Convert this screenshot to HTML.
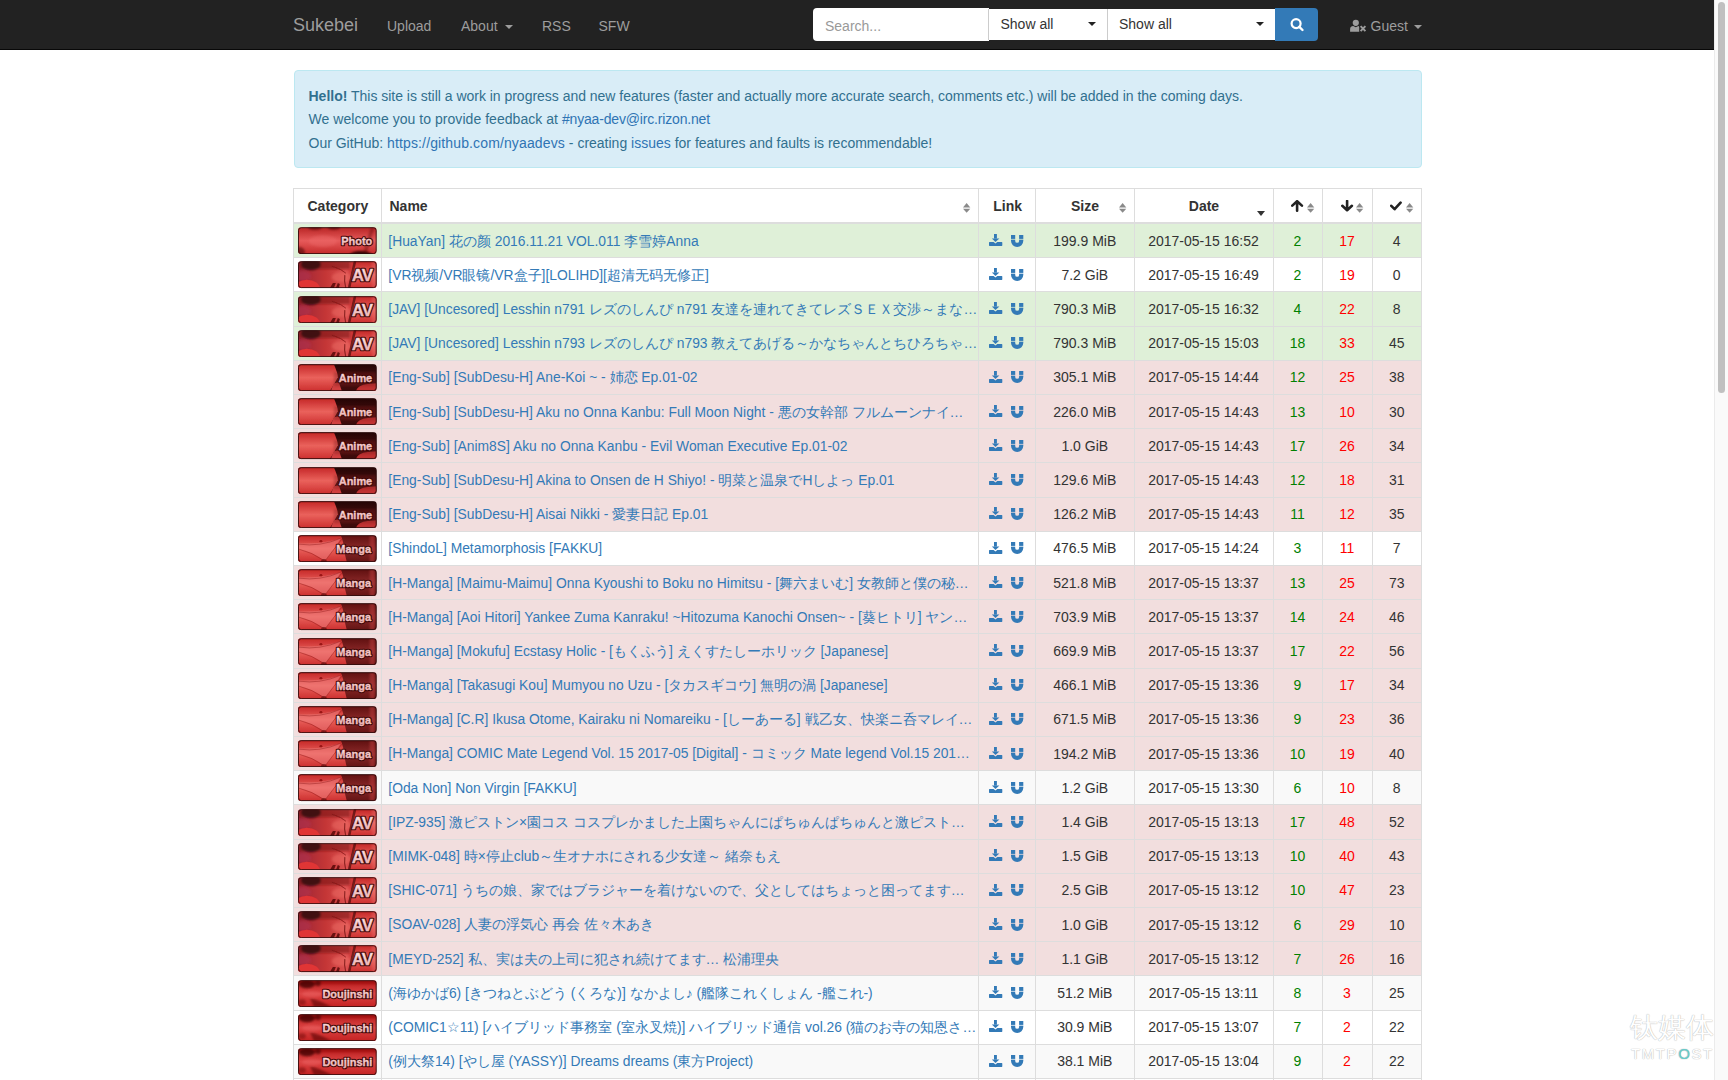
<!DOCTYPE html><html><head><meta charset="utf-8"><title>Sukebei</title><style>
*{margin:0;padding:0;box-sizing:border-box}
html,body{width:1728px;height:1080px;overflow:hidden;background:#fff}
body{font-family:"Liberation Sans",sans-serif;position:relative}
.t{position:absolute;white-space:nowrap}
.ic{position:absolute;display:block}
.abs{position:absolute}
.nav{position:absolute;left:0;top:0;width:1714px;height:50px;background:#222;border-bottom:1px solid #080808}
.caret{position:absolute;width:0;height:0;border-left:4px solid transparent;border-right:4px solid transparent;border-top:4.5px solid #9d9d9d}
.alert{position:absolute;left:293.5px;top:70px;width:1128.5px;height:97.5px;background:#d9edf7;border:1px solid #bce8f1;border-radius:4px}
.row{position:absolute;left:293.5px;width:1128px}
.hl{position:absolute;left:293px;width:1129px;height:1px;background:#ddd}
.vl{position:absolute;width:1px;background:#ddd}
.badge{position:absolute;left:298.2px;width:78.7px;height:27.3px;border-radius:3.5px;overflow:hidden;border:1px solid #4a1010}
.badge span{position:absolute;right:4px;font-weight:700;color:#f8d8d8;white-space:nowrap;text-shadow:-1px 0 #5a0a0a,1px 0 #5a0a0a,0 -1px #5a0a0a,0 1px #5a0a0a,1px 1px #5a0a0a,-1px -1px #5a0a0a,1px -1px #5a0a0a,-1px 1px #5a0a0a}
.nm{position:absolute;left:388.3px;width:589px;overflow:hidden;text-overflow:ellipsis;white-space:nowrap;color:#337ab7;font-size:13.85px;line-height:16px}
.c{position:absolute;text-align:center;font-size:14px;line-height:16px;white-space:nowrap}
</style></head><body><svg width="0" height="0" style="position:absolute">
<defs>
<filter id="bl" x="-20%" y="-50%" width="140%" height="200%"><feGaussianBlur stdDeviation="1.2"/></filter>
<filter id="bl2" x="-20%" y="-50%" width="140%" height="200%"><feGaussianBlur stdDeviation="0.6"/></filter>
<linearGradient id="gv" x1="0" y1="0" x2="0" y2="1"><stop offset="0" stop-color="#b82424"/><stop offset="0.5" stop-color="#e65a5a"/><stop offset="1" stop-color="#c42a2a"/></linearGradient>
<linearGradient id="gvl" x1="0" y1="0" x2="0" y2="1"><stop offset="0" stop-color="#c42626"/><stop offset="0.5" stop-color="#ea625c"/><stop offset="1" stop-color="#cc2e2e"/></linearGradient>
<linearGradient id="gdj" x1="0" y1="0" x2="0" y2="1"><stop offset="0" stop-color="#b81a1a"/><stop offset="0.5" stop-color="#dc4444"/><stop offset="1" stop-color="#c42222"/></linearGradient>
<linearGradient id="gav" x1="0" y1="0" x2="1" y2="0"><stop offset="0" stop-color="#9a2436"/><stop offset="0.35" stop-color="#c43636"/><stop offset="0.62" stop-color="#dc5050"/><stop offset="0.7" stop-color="#c83030"/></linearGradient>
<linearGradient id="gdk" x1="0" y1="0" x2="0" y2="1"><stop offset="0" stop-color="#240404"/><stop offset="0.6" stop-color="#4a1010"/><stop offset="1" stop-color="#3a0a0a"/></linearGradient>
<linearGradient id="gmr" x1="0" y1="0" x2="0" y2="1"><stop offset="0" stop-color="#601010"/><stop offset="0.5" stop-color="#8a2828"/><stop offset="1" stop-color="#641414"/></linearGradient>
<linearGradient id="gtx" x1="0" y1="0" x2="0" y2="1"><stop offset="0" stop-color="#fff0f0"/><stop offset="1" stop-color="#eaa4a4"/></linearGradient>
<clipPath id="bc"><rect x="0" y="0" width="79" height="27" rx="3"/></clipPath>
<symbol id="b-Photo" viewBox="0 0 79 27"><g clip-path="url(#bc)">
<rect width="79" height="27" fill="url(#gv)"/>
<g filter="url(#bl)">
<ellipse cx="63" cy="28" rx="11" ry="4" fill="#2a0404" opacity="0.9"/>
<ellipse cx="17" cy="0" rx="7" ry="2.5" fill="#3a0606" opacity="0.6"/>
<ellipse cx="36" cy="0" rx="6" ry="2.5" fill="#3a0606" opacity="0.6"/>
<path d="M73 0L77 0L69 27L65 27Z" fill="#4a0808" opacity="0.35"/>
<ellipse cx="1" cy="25" rx="6" ry="5" fill="#3a0606" opacity="0.5"/>
<ellipse cx="25" cy="14" rx="14" ry="6" fill="#f07070" opacity="0.35"/>
</g></g></symbol>
<symbol id="b-AV" viewBox="0 0 79 27"><g clip-path="url(#bc)">
<rect width="79" height="27" fill="url(#gav)"/>
<g filter="url(#bl)">
<rect x="0" y="0" width="52" height="8" fill="#7a1010" opacity="0.6"/>
<ellipse cx="13" cy="3" rx="10" ry="6" fill="#300810" opacity="0.8"/>
<ellipse cx="5" cy="15" rx="8" ry="5" fill="#b03050" opacity="0.6"/>
<ellipse cx="44" cy="16" rx="10" ry="5" fill="#f07068" opacity="0.45"/>
</g>
<g filter="url(#bl2)">
<ellipse cx="9" cy="27.5" rx="13" ry="9" fill="#e03434"/>
<path d="M32 27L35 22L38 22L36 27Z M38 27L40 22L42 23L41 27Z" fill="#4a0808" opacity="0.75"/>
<path d="M34 5Q44 8 48 12" fill="none" stroke="#7a1010" stroke-width="1" opacity="0.7"/>
<path d="M47 14Q46 20 48 27" fill="none" stroke="#5a0a0a" stroke-width="1.2" opacity="0.6"/>
</g>
<path d="M56.5 0L79 0L79 27L51 27Z" fill="url(#gvl)"/>
<path d="M56 0L58.5 0L52.5 27L50 27Z" fill="#4a0808" opacity="0.7" filter="url(#bl2)"/>
<rect x="74" y="0" width="5" height="27" fill="#f08080" opacity="0.3" filter="url(#bl)"/>
</g></symbol>
<symbol id="b-Anime" viewBox="0 0 79 27"><g clip-path="url(#bc)">
<rect width="79" height="27" fill="url(#gdk)"/>
<g filter="url(#bl2)">
<path d="M0 0L36 0Q40 9 40 13Q38 17 32 27L0 27Z" fill="url(#gvl)"/>
<path d="M33 27L36 19L41 18L44 27Z" fill="#d04040"/>
<path d="M58 27Q60 21 70 20L79 19L79 27Z" fill="#c03030"/>
</g>
<rect x="36" y="8" width="43" height="14" fill="#7a1a1a" opacity="0.35" filter="url(#bl)"/>
</g></symbol>
<symbol id="b-Manga" viewBox="0 0 79 27"><g clip-path="url(#bc)">
<rect width="79" height="27" fill="url(#gmr)"/>
<rect x="72" y="0" width="5" height="27" fill="#c04040" opacity="0.5" filter="url(#bl)"/>
<path d="M0 0L43 0Q46 8 46 12Q47 20 49 27L0 27Z" fill="url(#gvl)" filter="url(#bl2)"/>
<path d="M1 8Q20 10 43 3L36 14Q30 22 27 26Q14 16 1 14Z" fill="#f48a8a" opacity="0.45" filter="url(#bl2)"/>
<path d="M1 14Q14 17 27 26M27 26Q33 18 44 4M1 9Q22 12 43 3" fill="none" stroke="#8a1414" stroke-width="0.7" opacity="0.6"/>
<ellipse cx="26" cy="27" rx="3" ry="3" fill="#6a0c0c" opacity="0.7" filter="url(#bl2)"/>
<ellipse cx="23" cy="6" rx="1.5" ry="1.2" fill="#8a0a0a" opacity="0.8"/>
</g></symbol>
<symbol id="b-Doujinshi" viewBox="0 0 79 27"><g clip-path="url(#bc)">
<rect width="79" height="27" fill="url(#gdj)"/>
<g filter="url(#bl)">
<rect x="0" y="0" width="79" height="4" fill="#8a0c0c" opacity="0.5"/>
<ellipse cx="9" cy="4" rx="8" ry="4" fill="#3a0404" opacity="0.75"/>
<ellipse cx="20" cy="3" rx="3" ry="3" fill="#3a0404" opacity="0.6"/>
<ellipse cx="14" cy="14" rx="10" ry="3" fill="#f07070" opacity="0.35"/>
<path d="M12 18Q22 20 34 27L16 27Z" fill="#4a0606" opacity="0.55"/>
<ellipse cx="4" cy="22" rx="4" ry="3" fill="#5a0808" opacity="0.4"/>
</g>
</g></symbol>
</defs></svg>
<div class="nav"></div>
<div class="t" style="left:293.00px;top:16.26px;font-size:18px;line-height:18px;color:#9d9d9d;font-weight:400;">Sukebei</div>
<div class="t" style="left:387.00px;top:18.65px;font-size:14px;line-height:14px;color:#9d9d9d;font-weight:400;">Upload</div>
<div class="t" style="left:461.00px;top:18.75px;font-size:14px;line-height:14px;color:#9d9d9d;font-weight:400;">About</div>
<div class="caret" style="left:505px;top:25px"></div>
<div class="t" style="left:542.00px;top:18.75px;font-size:14px;line-height:14px;color:#9d9d9d;font-weight:400;">RSS</div>
<div class="t" style="left:598.50px;top:18.75px;font-size:14px;line-height:14px;color:#9d9d9d;font-weight:400;">SFW</div>
<div class="abs" style="left:812.7px;top:8px;width:176px;height:33px;background:#fff;border-radius:4px 0 0 4px"></div>
<div class="t" style="left:825.00px;top:18.85px;font-size:14px;line-height:14px;color:#999;font-weight:400;">Search...</div>
<div class="abs" style="left:988px;top:8.7px;width:287px;height:31.3px;background:#fff"></div>
<div class="abs" style="left:988px;top:8.7px;width:1px;height:31.3px;background:#ccc"></div>
<div class="abs" style="left:1107px;top:8.7px;width:1px;height:31.3px;background:#ccc"></div>
<div class="t" style="left:1000.50px;top:16.75px;font-size:14px;line-height:14px;color:#333;font-weight:400;">Show all</div>
<div class="caret" style="left:1087.5px;top:22px;border-top-color:#222"></div>
<div class="t" style="left:1119.00px;top:16.75px;font-size:14px;line-height:14px;color:#333;font-weight:400;">Show all</div>
<div class="caret" style="left:1256px;top:22px;border-top-color:#222"></div>
<div class="abs" style="left:1275px;top:8.3px;width:43.4px;height:32.3px;background:#337ab7;border-radius:0 4px 4px 0"></div>
<svg class="ic" style="left:1288px;top:16px" width="18" height="18" viewBox="0 0 18 18"><circle cx="8.1" cy="7.6" r="4.5" fill="none" stroke="#fff" stroke-width="2.2"/><path d="M11.3 10.8L14.5 14" stroke="#fff" stroke-width="2.4" stroke-linecap="round"/></svg>
<svg class="ic" style="left:1349px;top:18px" width="19" height="15" viewBox="0 0 19 15"><circle cx="6.8" cy="4.8" r="3.1" fill="#9d9d9d"/><path d="M1.1 13.8V11.2Q1.1 8.2 4.2 8.0L6.8 9.2L9.4 8.0Q10.4 8.2 10.2 9.2V13.8Z" fill="#9d9d9d"/><path d="M11.6 8.2L16.4 13.2M16.4 8.2L11.6 13.2" stroke="#9d9d9d" stroke-width="1.9"/></svg>
<div class="t" style="left:1370.50px;top:18.95px;font-size:14px;line-height:14px;color:#9d9d9d;font-weight:400;">Guest</div>
<div class="caret" style="left:1413.5px;top:24.5px"></div>
<div class="alert"></div>
<div class="t" style="left:308.50px;top:88.75px;font-size:14px;line-height:14px;color:#31708f;font-weight:400;"><b>Hello!</b><span style="letter-spacing:-0.02px"> This site is still a work in progress and new features (faster and actually more accurate search, comments etc.) will be added in the coming days.</span></div>
<div class="t" style="left:308.50px;top:111.85px;font-size:14px;line-height:14px;color:#31708f;font-weight:400;"><span style="letter-spacing:0.04px">We welcome you to provide feedback at </span><span style="color:#2f74b4;letter-spacing:-0.17px">#nyaa-dev@irc.rizon.net</span></div>
<div class="t" style="left:308.50px;top:136.25px;font-size:14px;line-height:14px;color:#31708f;font-weight:400;">Our GitHub: <span style="color:#2f74b4;letter-spacing:0.13px">https://github.com/nyaadevs</span> - creating <span style="color:#2f74b4">issues</span> for features and faults is recommendable!</div>
<div class="row" style="top:224.10px;height:34.20px;background:#dff0d8"></div>
<div class="row" style="top:258.30px;height:34.20px;background:#fff"></div>
<div class="row" style="top:292.49px;height:34.20px;background:#dff0d8"></div>
<div class="row" style="top:326.69px;height:34.20px;background:#dff0d8"></div>
<div class="row" style="top:360.88px;height:34.20px;background:#f2dede"></div>
<div class="row" style="top:395.08px;height:34.20px;background:#f2dede"></div>
<div class="row" style="top:429.28px;height:34.20px;background:#f2dede"></div>
<div class="row" style="top:463.47px;height:34.20px;background:#f2dede"></div>
<div class="row" style="top:497.67px;height:34.20px;background:#f2dede"></div>
<div class="row" style="top:531.86px;height:34.20px;background:#fff"></div>
<div class="row" style="top:566.06px;height:34.20px;background:#f2dede"></div>
<div class="row" style="top:600.26px;height:34.20px;background:#f2dede"></div>
<div class="row" style="top:634.45px;height:34.20px;background:#f2dede"></div>
<div class="row" style="top:668.65px;height:34.20px;background:#f2dede"></div>
<div class="row" style="top:702.84px;height:34.20px;background:#f2dede"></div>
<div class="row" style="top:737.04px;height:34.20px;background:#f2dede"></div>
<div class="row" style="top:771.24px;height:34.20px;background:#f9f9f9"></div>
<div class="row" style="top:805.43px;height:34.20px;background:#f2dede"></div>
<div class="row" style="top:839.63px;height:34.20px;background:#f2dede"></div>
<div class="row" style="top:873.82px;height:34.20px;background:#f2dede"></div>
<div class="row" style="top:908.02px;height:34.20px;background:#f2dede"></div>
<div class="row" style="top:942.22px;height:34.20px;background:#f2dede"></div>
<div class="row" style="top:976.41px;height:34.20px;background:#f9f9f9"></div>
<div class="row" style="top:1010.61px;height:34.20px;background:#fff"></div>
<div class="row" style="top:1044.80px;height:34.20px;background:#f9f9f9"></div>
<div class="hl" style="top:188px"></div>
<div class="hl" style="top:222px;height:2px"></div>
<div class="hl" style="top:257.30px"></div>
<div class="hl" style="top:291.49px"></div>
<div class="hl" style="top:325.69px"></div>
<div class="hl" style="top:359.88px"></div>
<div class="hl" style="top:394.08px"></div>
<div class="hl" style="top:428.28px"></div>
<div class="hl" style="top:462.47px"></div>
<div class="hl" style="top:496.67px"></div>
<div class="hl" style="top:530.86px"></div>
<div class="hl" style="top:565.06px"></div>
<div class="hl" style="top:599.26px"></div>
<div class="hl" style="top:633.45px"></div>
<div class="hl" style="top:667.65px"></div>
<div class="hl" style="top:701.84px"></div>
<div class="hl" style="top:736.04px"></div>
<div class="hl" style="top:770.24px"></div>
<div class="hl" style="top:804.43px"></div>
<div class="hl" style="top:838.63px"></div>
<div class="hl" style="top:872.82px"></div>
<div class="hl" style="top:907.02px"></div>
<div class="hl" style="top:941.22px"></div>
<div class="hl" style="top:975.41px"></div>
<div class="hl" style="top:1009.61px"></div>
<div class="hl" style="top:1043.80px"></div>
<div class="hl" style="top:1078.00px"></div>
<div class="vl" style="left:293.00px;top:188px;height:892px"></div>
<div class="vl" style="left:380.50px;top:188px;height:892px"></div>
<div class="vl" style="left:977.50px;top:188px;height:892px"></div>
<div class="vl" style="left:1035.00px;top:188px;height:892px"></div>
<div class="vl" style="left:1133.50px;top:188px;height:892px"></div>
<div class="vl" style="left:1272.50px;top:188px;height:892px"></div>
<div class="vl" style="left:1321.50px;top:188px;height:892px"></div>
<div class="vl" style="left:1371.50px;top:188px;height:892px"></div>
<div class="vl" style="left:1421.00px;top:188px;height:892px"></div>
<div class="t" style="left:307.50px;top:198.65px;font-size:14px;line-height:14px;color:#333;font-weight:700;">Category</div>
<div class="t" style="left:389.50px;top:198.65px;font-size:14px;line-height:14px;color:#333;font-weight:700;">Name</div>
<svg class="ic" style="left:962.80px;top:203.20px" width="8" height="10" viewBox="0 0 8 10"><path d="M0 4.5L3.65 0L7.3 4.5Z" fill="#8a8a8a"/><path d="M0 5.8L3.65 9.8L7.3 5.8Z" fill="#8a8a8a"/></svg>
<div class="t" style="left:993.30px;top:198.65px;font-size:14px;line-height:14px;color:#333;font-weight:700;">Link</div>
<div class="t" style="left:1071.00px;top:198.65px;font-size:14px;line-height:14px;color:#333;font-weight:700;">Size</div>
<svg class="ic" style="left:1118.50px;top:203.20px" width="8" height="10" viewBox="0 0 8 10"><path d="M0 4.5L3.65 0L7.3 4.5Z" fill="#8a8a8a"/><path d="M0 5.8L3.65 9.8L7.3 5.8Z" fill="#8a8a8a"/></svg>
<div class="t" style="left:1188.80px;top:198.65px;font-size:14px;line-height:14px;color:#333;font-weight:700;">Date</div>
<div class="caret" style="left:1256.5px;top:211px;border-top:5px solid #333;border-left-width:4px;border-right-width:4px"></div>
<svg class="ic" style="left:1291px;top:200px" width="13" height="12" viewBox="0 0 13 12"><path d="M1.3 5.6L6.1 1.2L10.9 5.6M6.1 1.6V10.7" fill="none" stroke="#222" stroke-width="2.6" stroke-linecap="round" stroke-linejoin="round"/></svg>
<svg class="ic" style="left:1306.80px;top:203.20px" width="8" height="10" viewBox="0 0 8 10"><path d="M0 4.5L3.65 0L7.3 4.5Z" fill="#8a8a8a"/><path d="M0 5.8L3.65 9.8L7.3 5.8Z" fill="#8a8a8a"/></svg>
<svg class="ic" style="left:1341px;top:200px" width="13" height="12" viewBox="0 0 13 12"><path d="M1.3 5.8L6.1 10.2L10.9 5.8M6.1 9.8V0.9" fill="none" stroke="#222" stroke-width="2.6" stroke-linecap="round" stroke-linejoin="round"/></svg>
<svg class="ic" style="left:1355.80px;top:203.20px" width="8" height="10" viewBox="0 0 8 10"><path d="M0 4.5L3.65 0L7.3 4.5Z" fill="#8a8a8a"/><path d="M0 5.8L3.65 9.8L7.3 5.8Z" fill="#8a8a8a"/></svg>
<svg class="ic" style="left:1390px;top:200px" width="13" height="12" viewBox="0 0 13 12"><path d="M1.3 5.8L4.6 9.2L10.6 2.6" fill="none" stroke="#222" stroke-width="2.6" stroke-linecap="round" stroke-linejoin="round"/></svg>
<svg class="ic" style="left:1405.80px;top:203.20px" width="8" height="10" viewBox="0 0 8 10"><path d="M0 4.5L3.65 0L7.3 4.5Z" fill="#8a8a8a"/><path d="M0 5.8L3.65 9.8L7.3 5.8Z" fill="#8a8a8a"/></svg>
<svg class="ic" style="left:298.2px;top:227.20px" width="78.7" height="27.3" viewBox="0 0 79 27"><use href="#b-Photo"/><rect x="0.5" y="0.5" width="78" height="26" rx="2.8" fill="none" stroke="#2a0c0c" stroke-width="1" opacity="0.85"/><text x="74.5" y="17.6" text-anchor="end" font-family="Liberation Sans" font-weight="700" font-size="11" fill="#3a0505" stroke="#3a0505" stroke-width="2.6" stroke-linejoin="round">Photo</text><text x="74.5" y="17.6" text-anchor="end" font-family="Liberation Sans" font-weight="700" font-size="11" fill="url(#gtx)" stroke="#f2c4c4" stroke-width="0.35">Photo</text></svg>
<div class="nm" style="top:232.55px">[HuaYan] 花の颜 2016.11.21 VOL.011 李雪婷Anna</div>
<svg class="ic" style="left:989px;top:233.90px" width="14" height="12" viewBox="0 0 14 12"><rect x="5.0" y="0" width="2.9" height="4.6" fill="#337ab7"/><path d="M2.9 4.4H10.4L6.45 8.1Z" fill="#337ab7"/><path d="M0.6 7.9H4.6L6.45 9.5L8.3 7.9H12.7Q13.3 7.9 13.3 8.5V11.3Q13.3 11.9 12.7 11.9H0.6Q0 11.9 0 11.3V8.5Q0 7.9 0.6 7.9Z" fill="#337ab7"/></svg>
<svg class="ic" style="left:1011.3px;top:234.70px" width="13" height="13" viewBox="0 0 13 13"><rect x="0" y="0" width="4.2" height="3.9" fill="#337ab7"/><rect x="8.1" y="0" width="4.2" height="3.9" fill="#337ab7"/><rect x="0" y="3.9" width="4.2" height="1.1" fill="#337ab7" opacity="0.35"/><rect x="8.1" y="3.9" width="4.2" height="1.1" fill="#337ab7" opacity="0.35"/><path d="M0 5.0H4.2V5.9A1.95 1.95 0 0 0 8.1 5.9V5.0H12.3V5.85A6.15 6.15 0 0 1 0 5.85Z" fill="#337ab7"/></svg>
<div class="c" style="left:1035.50px;width:98.50px;top:232.60px;color:#333">199.9 MiB</div>
<div class="c" style="left:1134.00px;width:139.00px;top:232.60px;color:#333">2017-05-15 16:52</div>
<div class="c" style="left:1273.00px;width:49.00px;top:232.60px;color:#008000">2</div>
<div class="c" style="left:1322.00px;width:50.00px;top:232.60px;color:#ff0000">17</div>
<div class="c" style="left:1372.00px;width:49.50px;top:232.60px;color:#333">4</div>
<svg class="ic" style="left:298.2px;top:261.40px" width="78.7" height="27.3" viewBox="0 0 79 27"><use href="#b-AV"/><rect x="0.5" y="0.5" width="78" height="26" rx="2.8" fill="none" stroke="#2a0c0c" stroke-width="1" opacity="0.85"/><text x="74.5" y="19.6" text-anchor="end" font-family="Liberation Sans" font-weight="700" font-size="17" letter-spacing="-0.9" fill="#3a0505" stroke="#3a0505" stroke-width="2.6" stroke-linejoin="round">AV</text><text x="74.5" y="19.6" text-anchor="end" font-family="Liberation Sans" font-weight="700" font-size="17" letter-spacing="-0.9" fill="url(#gtx)" stroke="#f2c4c4" stroke-width="0.35">AV</text></svg>
<div class="nm" style="top:266.75px">[VR视频/VR眼镜/VR盒子][LOLIHD][超清无码无修正]</div>
<svg class="ic" style="left:989px;top:268.10px" width="14" height="12" viewBox="0 0 14 12"><rect x="5.0" y="0" width="2.9" height="4.6" fill="#337ab7"/><path d="M2.9 4.4H10.4L6.45 8.1Z" fill="#337ab7"/><path d="M0.6 7.9H4.6L6.45 9.5L8.3 7.9H12.7Q13.3 7.9 13.3 8.5V11.3Q13.3 11.9 12.7 11.9H0.6Q0 11.9 0 11.3V8.5Q0 7.9 0.6 7.9Z" fill="#337ab7"/></svg>
<svg class="ic" style="left:1011.3px;top:268.90px" width="13" height="13" viewBox="0 0 13 13"><rect x="0" y="0" width="4.2" height="3.9" fill="#337ab7"/><rect x="8.1" y="0" width="4.2" height="3.9" fill="#337ab7"/><rect x="0" y="3.9" width="4.2" height="1.1" fill="#337ab7" opacity="0.35"/><rect x="8.1" y="3.9" width="4.2" height="1.1" fill="#337ab7" opacity="0.35"/><path d="M0 5.0H4.2V5.9A1.95 1.95 0 0 0 8.1 5.9V5.0H12.3V5.85A6.15 6.15 0 0 1 0 5.85Z" fill="#337ab7"/></svg>
<div class="c" style="left:1035.50px;width:98.50px;top:266.80px;color:#333">7.2 GiB</div>
<div class="c" style="left:1134.00px;width:139.00px;top:266.80px;color:#333">2017-05-15 16:49</div>
<div class="c" style="left:1273.00px;width:49.00px;top:266.80px;color:#008000">2</div>
<div class="c" style="left:1322.00px;width:50.00px;top:266.80px;color:#ff0000">19</div>
<div class="c" style="left:1372.00px;width:49.50px;top:266.80px;color:#333">0</div>
<svg class="ic" style="left:298.2px;top:295.59px" width="78.7" height="27.3" viewBox="0 0 79 27"><use href="#b-AV"/><rect x="0.5" y="0.5" width="78" height="26" rx="2.8" fill="none" stroke="#2a0c0c" stroke-width="1" opacity="0.85"/><text x="74.5" y="19.6" text-anchor="end" font-family="Liberation Sans" font-weight="700" font-size="17" letter-spacing="-0.9" fill="#3a0505" stroke="#3a0505" stroke-width="2.6" stroke-linejoin="round">AV</text><text x="74.5" y="19.6" text-anchor="end" font-family="Liberation Sans" font-weight="700" font-size="17" letter-spacing="-0.9" fill="url(#gtx)" stroke="#f2c4c4" stroke-width="0.35">AV</text></svg>
<div class="nm" style="top:300.94px">[JAV] [Uncesored] Lesshin n791 レズのしんぴ n791 友達を連れてきてレズＳＥＸ交渉～まなみちゃんとゆうこちゃん</div>
<svg class="ic" style="left:989px;top:302.29px" width="14" height="12" viewBox="0 0 14 12"><rect x="5.0" y="0" width="2.9" height="4.6" fill="#337ab7"/><path d="M2.9 4.4H10.4L6.45 8.1Z" fill="#337ab7"/><path d="M0.6 7.9H4.6L6.45 9.5L8.3 7.9H12.7Q13.3 7.9 13.3 8.5V11.3Q13.3 11.9 12.7 11.9H0.6Q0 11.9 0 11.3V8.5Q0 7.9 0.6 7.9Z" fill="#337ab7"/></svg>
<svg class="ic" style="left:1011.3px;top:303.09px" width="13" height="13" viewBox="0 0 13 13"><rect x="0" y="0" width="4.2" height="3.9" fill="#337ab7"/><rect x="8.1" y="0" width="4.2" height="3.9" fill="#337ab7"/><rect x="0" y="3.9" width="4.2" height="1.1" fill="#337ab7" opacity="0.35"/><rect x="8.1" y="3.9" width="4.2" height="1.1" fill="#337ab7" opacity="0.35"/><path d="M0 5.0H4.2V5.9A1.95 1.95 0 0 0 8.1 5.9V5.0H12.3V5.85A6.15 6.15 0 0 1 0 5.85Z" fill="#337ab7"/></svg>
<div class="c" style="left:1035.50px;width:98.50px;top:300.99px;color:#333">790.3 MiB</div>
<div class="c" style="left:1134.00px;width:139.00px;top:300.99px;color:#333">2017-05-15 16:32</div>
<div class="c" style="left:1273.00px;width:49.00px;top:300.99px;color:#008000">4</div>
<div class="c" style="left:1322.00px;width:50.00px;top:300.99px;color:#ff0000">22</div>
<div class="c" style="left:1372.00px;width:49.50px;top:300.99px;color:#333">8</div>
<svg class="ic" style="left:298.2px;top:329.79px" width="78.7" height="27.3" viewBox="0 0 79 27"><use href="#b-AV"/><rect x="0.5" y="0.5" width="78" height="26" rx="2.8" fill="none" stroke="#2a0c0c" stroke-width="1" opacity="0.85"/><text x="74.5" y="19.6" text-anchor="end" font-family="Liberation Sans" font-weight="700" font-size="17" letter-spacing="-0.9" fill="#3a0505" stroke="#3a0505" stroke-width="2.6" stroke-linejoin="round">AV</text><text x="74.5" y="19.6" text-anchor="end" font-family="Liberation Sans" font-weight="700" font-size="17" letter-spacing="-0.9" fill="url(#gtx)" stroke="#f2c4c4" stroke-width="0.35">AV</text></svg>
<div class="nm" style="top:335.14px">[JAV] [Uncesored] Lesshin n793 レズのしんぴ n793 教えてあげる～かなちゃんとちひろちゃん</div>
<svg class="ic" style="left:989px;top:336.49px" width="14" height="12" viewBox="0 0 14 12"><rect x="5.0" y="0" width="2.9" height="4.6" fill="#337ab7"/><path d="M2.9 4.4H10.4L6.45 8.1Z" fill="#337ab7"/><path d="M0.6 7.9H4.6L6.45 9.5L8.3 7.9H12.7Q13.3 7.9 13.3 8.5V11.3Q13.3 11.9 12.7 11.9H0.6Q0 11.9 0 11.3V8.5Q0 7.9 0.6 7.9Z" fill="#337ab7"/></svg>
<svg class="ic" style="left:1011.3px;top:337.29px" width="13" height="13" viewBox="0 0 13 13"><rect x="0" y="0" width="4.2" height="3.9" fill="#337ab7"/><rect x="8.1" y="0" width="4.2" height="3.9" fill="#337ab7"/><rect x="0" y="3.9" width="4.2" height="1.1" fill="#337ab7" opacity="0.35"/><rect x="8.1" y="3.9" width="4.2" height="1.1" fill="#337ab7" opacity="0.35"/><path d="M0 5.0H4.2V5.9A1.95 1.95 0 0 0 8.1 5.9V5.0H12.3V5.85A6.15 6.15 0 0 1 0 5.85Z" fill="#337ab7"/></svg>
<div class="c" style="left:1035.50px;width:98.50px;top:335.19px;color:#333">790.3 MiB</div>
<div class="c" style="left:1134.00px;width:139.00px;top:335.19px;color:#333">2017-05-15 15:03</div>
<div class="c" style="left:1273.00px;width:49.00px;top:335.19px;color:#008000">18</div>
<div class="c" style="left:1322.00px;width:50.00px;top:335.19px;color:#ff0000">33</div>
<div class="c" style="left:1372.00px;width:49.50px;top:335.19px;color:#333">45</div>
<svg class="ic" style="left:298.2px;top:363.98px" width="78.7" height="27.3" viewBox="0 0 79 27"><use href="#b-Anime"/><rect x="0.5" y="0.5" width="78" height="26" rx="2.8" fill="none" stroke="#2a0c0c" stroke-width="1" opacity="0.85"/><text x="74.5" y="17.6" text-anchor="end" font-family="Liberation Sans" font-weight="700" font-size="11" fill="#3a0505" stroke="#3a0505" stroke-width="2.6" stroke-linejoin="round">Anime</text><text x="74.5" y="17.6" text-anchor="end" font-family="Liberation Sans" font-weight="700" font-size="11" fill="url(#gtx)" stroke="#f2c4c4" stroke-width="0.35">Anime</text></svg>
<div class="nm" style="top:369.33px">[Eng-Sub] [SubDesu-H] Ane-Koi ~ - 姉恋 Ep.01-02</div>
<svg class="ic" style="left:989px;top:370.68px" width="14" height="12" viewBox="0 0 14 12"><rect x="5.0" y="0" width="2.9" height="4.6" fill="#337ab7"/><path d="M2.9 4.4H10.4L6.45 8.1Z" fill="#337ab7"/><path d="M0.6 7.9H4.6L6.45 9.5L8.3 7.9H12.7Q13.3 7.9 13.3 8.5V11.3Q13.3 11.9 12.7 11.9H0.6Q0 11.9 0 11.3V8.5Q0 7.9 0.6 7.9Z" fill="#337ab7"/></svg>
<svg class="ic" style="left:1011.3px;top:371.48px" width="13" height="13" viewBox="0 0 13 13"><rect x="0" y="0" width="4.2" height="3.9" fill="#337ab7"/><rect x="8.1" y="0" width="4.2" height="3.9" fill="#337ab7"/><rect x="0" y="3.9" width="4.2" height="1.1" fill="#337ab7" opacity="0.35"/><rect x="8.1" y="3.9" width="4.2" height="1.1" fill="#337ab7" opacity="0.35"/><path d="M0 5.0H4.2V5.9A1.95 1.95 0 0 0 8.1 5.9V5.0H12.3V5.85A6.15 6.15 0 0 1 0 5.85Z" fill="#337ab7"/></svg>
<div class="c" style="left:1035.50px;width:98.50px;top:369.38px;color:#333">305.1 MiB</div>
<div class="c" style="left:1134.00px;width:139.00px;top:369.38px;color:#333">2017-05-15 14:44</div>
<div class="c" style="left:1273.00px;width:49.00px;top:369.38px;color:#008000">12</div>
<div class="c" style="left:1322.00px;width:50.00px;top:369.38px;color:#ff0000">25</div>
<div class="c" style="left:1372.00px;width:49.50px;top:369.38px;color:#333">38</div>
<svg class="ic" style="left:298.2px;top:398.18px" width="78.7" height="27.3" viewBox="0 0 79 27"><use href="#b-Anime"/><rect x="0.5" y="0.5" width="78" height="26" rx="2.8" fill="none" stroke="#2a0c0c" stroke-width="1" opacity="0.85"/><text x="74.5" y="17.6" text-anchor="end" font-family="Liberation Sans" font-weight="700" font-size="11" fill="#3a0505" stroke="#3a0505" stroke-width="2.6" stroke-linejoin="round">Anime</text><text x="74.5" y="17.6" text-anchor="end" font-family="Liberation Sans" font-weight="700" font-size="11" fill="url(#gtx)" stroke="#f2c4c4" stroke-width="0.35">Anime</text></svg>
<div class="nm" style="top:403.53px">[Eng-Sub] [SubDesu-H] Aku no Onna Kanbu: Full Moon Night - 悪の女幹部 フルムーンナイト Ep.01</div>
<svg class="ic" style="left:989px;top:404.88px" width="14" height="12" viewBox="0 0 14 12"><rect x="5.0" y="0" width="2.9" height="4.6" fill="#337ab7"/><path d="M2.9 4.4H10.4L6.45 8.1Z" fill="#337ab7"/><path d="M0.6 7.9H4.6L6.45 9.5L8.3 7.9H12.7Q13.3 7.9 13.3 8.5V11.3Q13.3 11.9 12.7 11.9H0.6Q0 11.9 0 11.3V8.5Q0 7.9 0.6 7.9Z" fill="#337ab7"/></svg>
<svg class="ic" style="left:1011.3px;top:405.68px" width="13" height="13" viewBox="0 0 13 13"><rect x="0" y="0" width="4.2" height="3.9" fill="#337ab7"/><rect x="8.1" y="0" width="4.2" height="3.9" fill="#337ab7"/><rect x="0" y="3.9" width="4.2" height="1.1" fill="#337ab7" opacity="0.35"/><rect x="8.1" y="3.9" width="4.2" height="1.1" fill="#337ab7" opacity="0.35"/><path d="M0 5.0H4.2V5.9A1.95 1.95 0 0 0 8.1 5.9V5.0H12.3V5.85A6.15 6.15 0 0 1 0 5.85Z" fill="#337ab7"/></svg>
<div class="c" style="left:1035.50px;width:98.50px;top:403.58px;color:#333">226.0 MiB</div>
<div class="c" style="left:1134.00px;width:139.00px;top:403.58px;color:#333">2017-05-15 14:43</div>
<div class="c" style="left:1273.00px;width:49.00px;top:403.58px;color:#008000">13</div>
<div class="c" style="left:1322.00px;width:50.00px;top:403.58px;color:#ff0000">10</div>
<div class="c" style="left:1372.00px;width:49.50px;top:403.58px;color:#333">30</div>
<svg class="ic" style="left:298.2px;top:432.38px" width="78.7" height="27.3" viewBox="0 0 79 27"><use href="#b-Anime"/><rect x="0.5" y="0.5" width="78" height="26" rx="2.8" fill="none" stroke="#2a0c0c" stroke-width="1" opacity="0.85"/><text x="74.5" y="17.6" text-anchor="end" font-family="Liberation Sans" font-weight="700" font-size="11" fill="#3a0505" stroke="#3a0505" stroke-width="2.6" stroke-linejoin="round">Anime</text><text x="74.5" y="17.6" text-anchor="end" font-family="Liberation Sans" font-weight="700" font-size="11" fill="url(#gtx)" stroke="#f2c4c4" stroke-width="0.35">Anime</text></svg>
<div class="nm" style="top:437.73px">[Eng-Sub] [Anim8S] Aku no Onna Kanbu - Evil Woman Executive Ep.01-02</div>
<svg class="ic" style="left:989px;top:439.08px" width="14" height="12" viewBox="0 0 14 12"><rect x="5.0" y="0" width="2.9" height="4.6" fill="#337ab7"/><path d="M2.9 4.4H10.4L6.45 8.1Z" fill="#337ab7"/><path d="M0.6 7.9H4.6L6.45 9.5L8.3 7.9H12.7Q13.3 7.9 13.3 8.5V11.3Q13.3 11.9 12.7 11.9H0.6Q0 11.9 0 11.3V8.5Q0 7.9 0.6 7.9Z" fill="#337ab7"/></svg>
<svg class="ic" style="left:1011.3px;top:439.88px" width="13" height="13" viewBox="0 0 13 13"><rect x="0" y="0" width="4.2" height="3.9" fill="#337ab7"/><rect x="8.1" y="0" width="4.2" height="3.9" fill="#337ab7"/><rect x="0" y="3.9" width="4.2" height="1.1" fill="#337ab7" opacity="0.35"/><rect x="8.1" y="3.9" width="4.2" height="1.1" fill="#337ab7" opacity="0.35"/><path d="M0 5.0H4.2V5.9A1.95 1.95 0 0 0 8.1 5.9V5.0H12.3V5.85A6.15 6.15 0 0 1 0 5.85Z" fill="#337ab7"/></svg>
<div class="c" style="left:1035.50px;width:98.50px;top:437.78px;color:#333">1.0 GiB</div>
<div class="c" style="left:1134.00px;width:139.00px;top:437.78px;color:#333">2017-05-15 14:43</div>
<div class="c" style="left:1273.00px;width:49.00px;top:437.78px;color:#008000">17</div>
<div class="c" style="left:1322.00px;width:50.00px;top:437.78px;color:#ff0000">26</div>
<div class="c" style="left:1372.00px;width:49.50px;top:437.78px;color:#333">34</div>
<svg class="ic" style="left:298.2px;top:466.57px" width="78.7" height="27.3" viewBox="0 0 79 27"><use href="#b-Anime"/><rect x="0.5" y="0.5" width="78" height="26" rx="2.8" fill="none" stroke="#2a0c0c" stroke-width="1" opacity="0.85"/><text x="74.5" y="17.6" text-anchor="end" font-family="Liberation Sans" font-weight="700" font-size="11" fill="#3a0505" stroke="#3a0505" stroke-width="2.6" stroke-linejoin="round">Anime</text><text x="74.5" y="17.6" text-anchor="end" font-family="Liberation Sans" font-weight="700" font-size="11" fill="url(#gtx)" stroke="#f2c4c4" stroke-width="0.35">Anime</text></svg>
<div class="nm" style="top:471.92px">[Eng-Sub] [SubDesu-H] Akina to Onsen de H Shiyo! - 明菜と温泉でHしよっ Ep.01</div>
<svg class="ic" style="left:989px;top:473.27px" width="14" height="12" viewBox="0 0 14 12"><rect x="5.0" y="0" width="2.9" height="4.6" fill="#337ab7"/><path d="M2.9 4.4H10.4L6.45 8.1Z" fill="#337ab7"/><path d="M0.6 7.9H4.6L6.45 9.5L8.3 7.9H12.7Q13.3 7.9 13.3 8.5V11.3Q13.3 11.9 12.7 11.9H0.6Q0 11.9 0 11.3V8.5Q0 7.9 0.6 7.9Z" fill="#337ab7"/></svg>
<svg class="ic" style="left:1011.3px;top:474.07px" width="13" height="13" viewBox="0 0 13 13"><rect x="0" y="0" width="4.2" height="3.9" fill="#337ab7"/><rect x="8.1" y="0" width="4.2" height="3.9" fill="#337ab7"/><rect x="0" y="3.9" width="4.2" height="1.1" fill="#337ab7" opacity="0.35"/><rect x="8.1" y="3.9" width="4.2" height="1.1" fill="#337ab7" opacity="0.35"/><path d="M0 5.0H4.2V5.9A1.95 1.95 0 0 0 8.1 5.9V5.0H12.3V5.85A6.15 6.15 0 0 1 0 5.85Z" fill="#337ab7"/></svg>
<div class="c" style="left:1035.50px;width:98.50px;top:471.97px;color:#333">129.6 MiB</div>
<div class="c" style="left:1134.00px;width:139.00px;top:471.97px;color:#333">2017-05-15 14:43</div>
<div class="c" style="left:1273.00px;width:49.00px;top:471.97px;color:#008000">12</div>
<div class="c" style="left:1322.00px;width:50.00px;top:471.97px;color:#ff0000">18</div>
<div class="c" style="left:1372.00px;width:49.50px;top:471.97px;color:#333">31</div>
<svg class="ic" style="left:298.2px;top:500.77px" width="78.7" height="27.3" viewBox="0 0 79 27"><use href="#b-Anime"/><rect x="0.5" y="0.5" width="78" height="26" rx="2.8" fill="none" stroke="#2a0c0c" stroke-width="1" opacity="0.85"/><text x="74.5" y="17.6" text-anchor="end" font-family="Liberation Sans" font-weight="700" font-size="11" fill="#3a0505" stroke="#3a0505" stroke-width="2.6" stroke-linejoin="round">Anime</text><text x="74.5" y="17.6" text-anchor="end" font-family="Liberation Sans" font-weight="700" font-size="11" fill="url(#gtx)" stroke="#f2c4c4" stroke-width="0.35">Anime</text></svg>
<div class="nm" style="top:506.12px">[Eng-Sub] [SubDesu-H] Aisai Nikki - 愛妻日記 Ep.01</div>
<svg class="ic" style="left:989px;top:507.47px" width="14" height="12" viewBox="0 0 14 12"><rect x="5.0" y="0" width="2.9" height="4.6" fill="#337ab7"/><path d="M2.9 4.4H10.4L6.45 8.1Z" fill="#337ab7"/><path d="M0.6 7.9H4.6L6.45 9.5L8.3 7.9H12.7Q13.3 7.9 13.3 8.5V11.3Q13.3 11.9 12.7 11.9H0.6Q0 11.9 0 11.3V8.5Q0 7.9 0.6 7.9Z" fill="#337ab7"/></svg>
<svg class="ic" style="left:1011.3px;top:508.27px" width="13" height="13" viewBox="0 0 13 13"><rect x="0" y="0" width="4.2" height="3.9" fill="#337ab7"/><rect x="8.1" y="0" width="4.2" height="3.9" fill="#337ab7"/><rect x="0" y="3.9" width="4.2" height="1.1" fill="#337ab7" opacity="0.35"/><rect x="8.1" y="3.9" width="4.2" height="1.1" fill="#337ab7" opacity="0.35"/><path d="M0 5.0H4.2V5.9A1.95 1.95 0 0 0 8.1 5.9V5.0H12.3V5.85A6.15 6.15 0 0 1 0 5.85Z" fill="#337ab7"/></svg>
<div class="c" style="left:1035.50px;width:98.50px;top:506.17px;color:#333">126.2 MiB</div>
<div class="c" style="left:1134.00px;width:139.00px;top:506.17px;color:#333">2017-05-15 14:43</div>
<div class="c" style="left:1273.00px;width:49.00px;top:506.17px;color:#008000">11</div>
<div class="c" style="left:1322.00px;width:50.00px;top:506.17px;color:#ff0000">12</div>
<div class="c" style="left:1372.00px;width:49.50px;top:506.17px;color:#333">35</div>
<svg class="ic" style="left:298.2px;top:534.96px" width="78.7" height="27.3" viewBox="0 0 79 27"><use href="#b-Manga"/><rect x="0.5" y="0.5" width="78" height="26" rx="2.8" fill="none" stroke="#2a0c0c" stroke-width="1" opacity="0.85"/><text x="73.3" y="17.6" text-anchor="end" font-family="Liberation Sans" font-weight="700" font-size="11" fill="#3a0505" stroke="#3a0505" stroke-width="2.6" stroke-linejoin="round">Manga</text><text x="73.3" y="17.6" text-anchor="end" font-family="Liberation Sans" font-weight="700" font-size="11" fill="url(#gtx)" stroke="#f2c4c4" stroke-width="0.35">Manga</text></svg>
<div class="nm" style="top:540.31px">[ShindoL] Metamorphosis [FAKKU]</div>
<svg class="ic" style="left:989px;top:541.66px" width="14" height="12" viewBox="0 0 14 12"><rect x="5.0" y="0" width="2.9" height="4.6" fill="#337ab7"/><path d="M2.9 4.4H10.4L6.45 8.1Z" fill="#337ab7"/><path d="M0.6 7.9H4.6L6.45 9.5L8.3 7.9H12.7Q13.3 7.9 13.3 8.5V11.3Q13.3 11.9 12.7 11.9H0.6Q0 11.9 0 11.3V8.5Q0 7.9 0.6 7.9Z" fill="#337ab7"/></svg>
<svg class="ic" style="left:1011.3px;top:542.46px" width="13" height="13" viewBox="0 0 13 13"><rect x="0" y="0" width="4.2" height="3.9" fill="#337ab7"/><rect x="8.1" y="0" width="4.2" height="3.9" fill="#337ab7"/><rect x="0" y="3.9" width="4.2" height="1.1" fill="#337ab7" opacity="0.35"/><rect x="8.1" y="3.9" width="4.2" height="1.1" fill="#337ab7" opacity="0.35"/><path d="M0 5.0H4.2V5.9A1.95 1.95 0 0 0 8.1 5.9V5.0H12.3V5.85A6.15 6.15 0 0 1 0 5.85Z" fill="#337ab7"/></svg>
<div class="c" style="left:1035.50px;width:98.50px;top:540.36px;color:#333">476.5 MiB</div>
<div class="c" style="left:1134.00px;width:139.00px;top:540.36px;color:#333">2017-05-15 14:24</div>
<div class="c" style="left:1273.00px;width:49.00px;top:540.36px;color:#008000">3</div>
<div class="c" style="left:1322.00px;width:50.00px;top:540.36px;color:#ff0000">11</div>
<div class="c" style="left:1372.00px;width:49.50px;top:540.36px;color:#333">7</div>
<svg class="ic" style="left:298.2px;top:569.16px" width="78.7" height="27.3" viewBox="0 0 79 27"><use href="#b-Manga"/><rect x="0.5" y="0.5" width="78" height="26" rx="2.8" fill="none" stroke="#2a0c0c" stroke-width="1" opacity="0.85"/><text x="73.3" y="17.6" text-anchor="end" font-family="Liberation Sans" font-weight="700" font-size="11" fill="#3a0505" stroke="#3a0505" stroke-width="2.6" stroke-linejoin="round">Manga</text><text x="73.3" y="17.6" text-anchor="end" font-family="Liberation Sans" font-weight="700" font-size="11" fill="url(#gtx)" stroke="#f2c4c4" stroke-width="0.35">Manga</text></svg>
<div class="nm" style="top:574.51px">[H-Manga] [Maimu-Maimu] Onna Kyoushi to Boku no Himitsu - [舞六まいむ] 女教師と僕の秘密 [Japanese]</div>
<svg class="ic" style="left:989px;top:575.86px" width="14" height="12" viewBox="0 0 14 12"><rect x="5.0" y="0" width="2.9" height="4.6" fill="#337ab7"/><path d="M2.9 4.4H10.4L6.45 8.1Z" fill="#337ab7"/><path d="M0.6 7.9H4.6L6.45 9.5L8.3 7.9H12.7Q13.3 7.9 13.3 8.5V11.3Q13.3 11.9 12.7 11.9H0.6Q0 11.9 0 11.3V8.5Q0 7.9 0.6 7.9Z" fill="#337ab7"/></svg>
<svg class="ic" style="left:1011.3px;top:576.66px" width="13" height="13" viewBox="0 0 13 13"><rect x="0" y="0" width="4.2" height="3.9" fill="#337ab7"/><rect x="8.1" y="0" width="4.2" height="3.9" fill="#337ab7"/><rect x="0" y="3.9" width="4.2" height="1.1" fill="#337ab7" opacity="0.35"/><rect x="8.1" y="3.9" width="4.2" height="1.1" fill="#337ab7" opacity="0.35"/><path d="M0 5.0H4.2V5.9A1.95 1.95 0 0 0 8.1 5.9V5.0H12.3V5.85A6.15 6.15 0 0 1 0 5.85Z" fill="#337ab7"/></svg>
<div class="c" style="left:1035.50px;width:98.50px;top:574.56px;color:#333">521.8 MiB</div>
<div class="c" style="left:1134.00px;width:139.00px;top:574.56px;color:#333">2017-05-15 13:37</div>
<div class="c" style="left:1273.00px;width:49.00px;top:574.56px;color:#008000">13</div>
<div class="c" style="left:1322.00px;width:50.00px;top:574.56px;color:#ff0000">25</div>
<div class="c" style="left:1372.00px;width:49.50px;top:574.56px;color:#333">73</div>
<svg class="ic" style="left:298.2px;top:603.36px" width="78.7" height="27.3" viewBox="0 0 79 27"><use href="#b-Manga"/><rect x="0.5" y="0.5" width="78" height="26" rx="2.8" fill="none" stroke="#2a0c0c" stroke-width="1" opacity="0.85"/><text x="73.3" y="17.6" text-anchor="end" font-family="Liberation Sans" font-weight="700" font-size="11" fill="#3a0505" stroke="#3a0505" stroke-width="2.6" stroke-linejoin="round">Manga</text><text x="73.3" y="17.6" text-anchor="end" font-family="Liberation Sans" font-weight="700" font-size="11" fill="url(#gtx)" stroke="#f2c4c4" stroke-width="0.35">Manga</text></svg>
<div class="nm" style="top:608.71px">[H-Manga] [Aoi Hitori] Yankee Zuma Kanraku! ~Hitozuma Kanochi Onsen~ - [葵ヒトリ] ヤンキー妻陥落</div>
<svg class="ic" style="left:989px;top:610.06px" width="14" height="12" viewBox="0 0 14 12"><rect x="5.0" y="0" width="2.9" height="4.6" fill="#337ab7"/><path d="M2.9 4.4H10.4L6.45 8.1Z" fill="#337ab7"/><path d="M0.6 7.9H4.6L6.45 9.5L8.3 7.9H12.7Q13.3 7.9 13.3 8.5V11.3Q13.3 11.9 12.7 11.9H0.6Q0 11.9 0 11.3V8.5Q0 7.9 0.6 7.9Z" fill="#337ab7"/></svg>
<svg class="ic" style="left:1011.3px;top:610.86px" width="13" height="13" viewBox="0 0 13 13"><rect x="0" y="0" width="4.2" height="3.9" fill="#337ab7"/><rect x="8.1" y="0" width="4.2" height="3.9" fill="#337ab7"/><rect x="0" y="3.9" width="4.2" height="1.1" fill="#337ab7" opacity="0.35"/><rect x="8.1" y="3.9" width="4.2" height="1.1" fill="#337ab7" opacity="0.35"/><path d="M0 5.0H4.2V5.9A1.95 1.95 0 0 0 8.1 5.9V5.0H12.3V5.85A6.15 6.15 0 0 1 0 5.85Z" fill="#337ab7"/></svg>
<div class="c" style="left:1035.50px;width:98.50px;top:608.76px;color:#333">703.9 MiB</div>
<div class="c" style="left:1134.00px;width:139.00px;top:608.76px;color:#333">2017-05-15 13:37</div>
<div class="c" style="left:1273.00px;width:49.00px;top:608.76px;color:#008000">14</div>
<div class="c" style="left:1322.00px;width:50.00px;top:608.76px;color:#ff0000">24</div>
<div class="c" style="left:1372.00px;width:49.50px;top:608.76px;color:#333">46</div>
<svg class="ic" style="left:298.2px;top:637.55px" width="78.7" height="27.3" viewBox="0 0 79 27"><use href="#b-Manga"/><rect x="0.5" y="0.5" width="78" height="26" rx="2.8" fill="none" stroke="#2a0c0c" stroke-width="1" opacity="0.85"/><text x="73.3" y="17.6" text-anchor="end" font-family="Liberation Sans" font-weight="700" font-size="11" fill="#3a0505" stroke="#3a0505" stroke-width="2.6" stroke-linejoin="round">Manga</text><text x="73.3" y="17.6" text-anchor="end" font-family="Liberation Sans" font-weight="700" font-size="11" fill="url(#gtx)" stroke="#f2c4c4" stroke-width="0.35">Manga</text></svg>
<div class="nm" style="top:642.90px">[H-Manga] [Mokufu] Ecstasy Holic - [もくふう] えくすたしーホリック [Japanese]</div>
<svg class="ic" style="left:989px;top:644.25px" width="14" height="12" viewBox="0 0 14 12"><rect x="5.0" y="0" width="2.9" height="4.6" fill="#337ab7"/><path d="M2.9 4.4H10.4L6.45 8.1Z" fill="#337ab7"/><path d="M0.6 7.9H4.6L6.45 9.5L8.3 7.9H12.7Q13.3 7.9 13.3 8.5V11.3Q13.3 11.9 12.7 11.9H0.6Q0 11.9 0 11.3V8.5Q0 7.9 0.6 7.9Z" fill="#337ab7"/></svg>
<svg class="ic" style="left:1011.3px;top:645.05px" width="13" height="13" viewBox="0 0 13 13"><rect x="0" y="0" width="4.2" height="3.9" fill="#337ab7"/><rect x="8.1" y="0" width="4.2" height="3.9" fill="#337ab7"/><rect x="0" y="3.9" width="4.2" height="1.1" fill="#337ab7" opacity="0.35"/><rect x="8.1" y="3.9" width="4.2" height="1.1" fill="#337ab7" opacity="0.35"/><path d="M0 5.0H4.2V5.9A1.95 1.95 0 0 0 8.1 5.9V5.0H12.3V5.85A6.15 6.15 0 0 1 0 5.85Z" fill="#337ab7"/></svg>
<div class="c" style="left:1035.50px;width:98.50px;top:642.95px;color:#333">669.9 MiB</div>
<div class="c" style="left:1134.00px;width:139.00px;top:642.95px;color:#333">2017-05-15 13:37</div>
<div class="c" style="left:1273.00px;width:49.00px;top:642.95px;color:#008000">17</div>
<div class="c" style="left:1322.00px;width:50.00px;top:642.95px;color:#ff0000">22</div>
<div class="c" style="left:1372.00px;width:49.50px;top:642.95px;color:#333">56</div>
<svg class="ic" style="left:298.2px;top:671.75px" width="78.7" height="27.3" viewBox="0 0 79 27"><use href="#b-Manga"/><rect x="0.5" y="0.5" width="78" height="26" rx="2.8" fill="none" stroke="#2a0c0c" stroke-width="1" opacity="0.85"/><text x="73.3" y="17.6" text-anchor="end" font-family="Liberation Sans" font-weight="700" font-size="11" fill="#3a0505" stroke="#3a0505" stroke-width="2.6" stroke-linejoin="round">Manga</text><text x="73.3" y="17.6" text-anchor="end" font-family="Liberation Sans" font-weight="700" font-size="11" fill="url(#gtx)" stroke="#f2c4c4" stroke-width="0.35">Manga</text></svg>
<div class="nm" style="top:677.10px">[H-Manga] [Takasugi Kou] Mumyou no Uzu - [タカスギコウ] 無明の渦 [Japanese]</div>
<svg class="ic" style="left:989px;top:678.45px" width="14" height="12" viewBox="0 0 14 12"><rect x="5.0" y="0" width="2.9" height="4.6" fill="#337ab7"/><path d="M2.9 4.4H10.4L6.45 8.1Z" fill="#337ab7"/><path d="M0.6 7.9H4.6L6.45 9.5L8.3 7.9H12.7Q13.3 7.9 13.3 8.5V11.3Q13.3 11.9 12.7 11.9H0.6Q0 11.9 0 11.3V8.5Q0 7.9 0.6 7.9Z" fill="#337ab7"/></svg>
<svg class="ic" style="left:1011.3px;top:679.25px" width="13" height="13" viewBox="0 0 13 13"><rect x="0" y="0" width="4.2" height="3.9" fill="#337ab7"/><rect x="8.1" y="0" width="4.2" height="3.9" fill="#337ab7"/><rect x="0" y="3.9" width="4.2" height="1.1" fill="#337ab7" opacity="0.35"/><rect x="8.1" y="3.9" width="4.2" height="1.1" fill="#337ab7" opacity="0.35"/><path d="M0 5.0H4.2V5.9A1.95 1.95 0 0 0 8.1 5.9V5.0H12.3V5.85A6.15 6.15 0 0 1 0 5.85Z" fill="#337ab7"/></svg>
<div class="c" style="left:1035.50px;width:98.50px;top:677.15px;color:#333">466.1 MiB</div>
<div class="c" style="left:1134.00px;width:139.00px;top:677.15px;color:#333">2017-05-15 13:36</div>
<div class="c" style="left:1273.00px;width:49.00px;top:677.15px;color:#008000">9</div>
<div class="c" style="left:1322.00px;width:50.00px;top:677.15px;color:#ff0000">17</div>
<div class="c" style="left:1372.00px;width:49.50px;top:677.15px;color:#333">34</div>
<svg class="ic" style="left:298.2px;top:705.94px" width="78.7" height="27.3" viewBox="0 0 79 27"><use href="#b-Manga"/><rect x="0.5" y="0.5" width="78" height="26" rx="2.8" fill="none" stroke="#2a0c0c" stroke-width="1" opacity="0.85"/><text x="73.3" y="17.6" text-anchor="end" font-family="Liberation Sans" font-weight="700" font-size="11" fill="#3a0505" stroke="#3a0505" stroke-width="2.6" stroke-linejoin="round">Manga</text><text x="73.3" y="17.6" text-anchor="end" font-family="Liberation Sans" font-weight="700" font-size="11" fill="url(#gtx)" stroke="#f2c4c4" stroke-width="0.35">Manga</text></svg>
<div class="nm" style="top:711.29px">[H-Manga] [C.R] Ikusa Otome, Kairaku ni Nomareiku - [しーあーる] 戦乙女、快楽ニ呑マレイク [Japanese]</div>
<svg class="ic" style="left:989px;top:712.64px" width="14" height="12" viewBox="0 0 14 12"><rect x="5.0" y="0" width="2.9" height="4.6" fill="#337ab7"/><path d="M2.9 4.4H10.4L6.45 8.1Z" fill="#337ab7"/><path d="M0.6 7.9H4.6L6.45 9.5L8.3 7.9H12.7Q13.3 7.9 13.3 8.5V11.3Q13.3 11.9 12.7 11.9H0.6Q0 11.9 0 11.3V8.5Q0 7.9 0.6 7.9Z" fill="#337ab7"/></svg>
<svg class="ic" style="left:1011.3px;top:713.44px" width="13" height="13" viewBox="0 0 13 13"><rect x="0" y="0" width="4.2" height="3.9" fill="#337ab7"/><rect x="8.1" y="0" width="4.2" height="3.9" fill="#337ab7"/><rect x="0" y="3.9" width="4.2" height="1.1" fill="#337ab7" opacity="0.35"/><rect x="8.1" y="3.9" width="4.2" height="1.1" fill="#337ab7" opacity="0.35"/><path d="M0 5.0H4.2V5.9A1.95 1.95 0 0 0 8.1 5.9V5.0H12.3V5.85A6.15 6.15 0 0 1 0 5.85Z" fill="#337ab7"/></svg>
<div class="c" style="left:1035.50px;width:98.50px;top:711.34px;color:#333">671.5 MiB</div>
<div class="c" style="left:1134.00px;width:139.00px;top:711.34px;color:#333">2017-05-15 13:36</div>
<div class="c" style="left:1273.00px;width:49.00px;top:711.34px;color:#008000">9</div>
<div class="c" style="left:1322.00px;width:50.00px;top:711.34px;color:#ff0000">23</div>
<div class="c" style="left:1372.00px;width:49.50px;top:711.34px;color:#333">36</div>
<svg class="ic" style="left:298.2px;top:740.14px" width="78.7" height="27.3" viewBox="0 0 79 27"><use href="#b-Manga"/><rect x="0.5" y="0.5" width="78" height="26" rx="2.8" fill="none" stroke="#2a0c0c" stroke-width="1" opacity="0.85"/><text x="73.3" y="17.6" text-anchor="end" font-family="Liberation Sans" font-weight="700" font-size="11" fill="#3a0505" stroke="#3a0505" stroke-width="2.6" stroke-linejoin="round">Manga</text><text x="73.3" y="17.6" text-anchor="end" font-family="Liberation Sans" font-weight="700" font-size="11" fill="url(#gtx)" stroke="#f2c4c4" stroke-width="0.35">Manga</text></svg>
<div class="nm" style="top:745.49px">[H-Manga] COMIC Mate Legend Vol. 15 2017-05 [Digital] - コミック Mate legend Vol.15 2017年5月号</div>
<svg class="ic" style="left:989px;top:746.84px" width="14" height="12" viewBox="0 0 14 12"><rect x="5.0" y="0" width="2.9" height="4.6" fill="#337ab7"/><path d="M2.9 4.4H10.4L6.45 8.1Z" fill="#337ab7"/><path d="M0.6 7.9H4.6L6.45 9.5L8.3 7.9H12.7Q13.3 7.9 13.3 8.5V11.3Q13.3 11.9 12.7 11.9H0.6Q0 11.9 0 11.3V8.5Q0 7.9 0.6 7.9Z" fill="#337ab7"/></svg>
<svg class="ic" style="left:1011.3px;top:747.64px" width="13" height="13" viewBox="0 0 13 13"><rect x="0" y="0" width="4.2" height="3.9" fill="#337ab7"/><rect x="8.1" y="0" width="4.2" height="3.9" fill="#337ab7"/><rect x="0" y="3.9" width="4.2" height="1.1" fill="#337ab7" opacity="0.35"/><rect x="8.1" y="3.9" width="4.2" height="1.1" fill="#337ab7" opacity="0.35"/><path d="M0 5.0H4.2V5.9A1.95 1.95 0 0 0 8.1 5.9V5.0H12.3V5.85A6.15 6.15 0 0 1 0 5.85Z" fill="#337ab7"/></svg>
<div class="c" style="left:1035.50px;width:98.50px;top:745.54px;color:#333">194.2 MiB</div>
<div class="c" style="left:1134.00px;width:139.00px;top:745.54px;color:#333">2017-05-15 13:36</div>
<div class="c" style="left:1273.00px;width:49.00px;top:745.54px;color:#008000">10</div>
<div class="c" style="left:1322.00px;width:50.00px;top:745.54px;color:#ff0000">19</div>
<div class="c" style="left:1372.00px;width:49.50px;top:745.54px;color:#333">40</div>
<svg class="ic" style="left:298.2px;top:774.34px" width="78.7" height="27.3" viewBox="0 0 79 27"><use href="#b-Manga"/><rect x="0.5" y="0.5" width="78" height="26" rx="2.8" fill="none" stroke="#2a0c0c" stroke-width="1" opacity="0.85"/><text x="73.3" y="17.6" text-anchor="end" font-family="Liberation Sans" font-weight="700" font-size="11" fill="#3a0505" stroke="#3a0505" stroke-width="2.6" stroke-linejoin="round">Manga</text><text x="73.3" y="17.6" text-anchor="end" font-family="Liberation Sans" font-weight="700" font-size="11" fill="url(#gtx)" stroke="#f2c4c4" stroke-width="0.35">Manga</text></svg>
<div class="nm" style="top:779.69px">[Oda Non] Non Virgin [FAKKU]</div>
<svg class="ic" style="left:989px;top:781.04px" width="14" height="12" viewBox="0 0 14 12"><rect x="5.0" y="0" width="2.9" height="4.6" fill="#337ab7"/><path d="M2.9 4.4H10.4L6.45 8.1Z" fill="#337ab7"/><path d="M0.6 7.9H4.6L6.45 9.5L8.3 7.9H12.7Q13.3 7.9 13.3 8.5V11.3Q13.3 11.9 12.7 11.9H0.6Q0 11.9 0 11.3V8.5Q0 7.9 0.6 7.9Z" fill="#337ab7"/></svg>
<svg class="ic" style="left:1011.3px;top:781.84px" width="13" height="13" viewBox="0 0 13 13"><rect x="0" y="0" width="4.2" height="3.9" fill="#337ab7"/><rect x="8.1" y="0" width="4.2" height="3.9" fill="#337ab7"/><rect x="0" y="3.9" width="4.2" height="1.1" fill="#337ab7" opacity="0.35"/><rect x="8.1" y="3.9" width="4.2" height="1.1" fill="#337ab7" opacity="0.35"/><path d="M0 5.0H4.2V5.9A1.95 1.95 0 0 0 8.1 5.9V5.0H12.3V5.85A6.15 6.15 0 0 1 0 5.85Z" fill="#337ab7"/></svg>
<div class="c" style="left:1035.50px;width:98.50px;top:779.74px;color:#333">1.2 GiB</div>
<div class="c" style="left:1134.00px;width:139.00px;top:779.74px;color:#333">2017-05-15 13:30</div>
<div class="c" style="left:1273.00px;width:49.00px;top:779.74px;color:#008000">6</div>
<div class="c" style="left:1322.00px;width:50.00px;top:779.74px;color:#ff0000">10</div>
<div class="c" style="left:1372.00px;width:49.50px;top:779.74px;color:#333">8</div>
<svg class="ic" style="left:298.2px;top:808.53px" width="78.7" height="27.3" viewBox="0 0 79 27"><use href="#b-AV"/><rect x="0.5" y="0.5" width="78" height="26" rx="2.8" fill="none" stroke="#2a0c0c" stroke-width="1" opacity="0.85"/><text x="74.5" y="19.6" text-anchor="end" font-family="Liberation Sans" font-weight="700" font-size="17" letter-spacing="-0.9" fill="#3a0505" stroke="#3a0505" stroke-width="2.6" stroke-linejoin="round">AV</text><text x="74.5" y="19.6" text-anchor="end" font-family="Liberation Sans" font-weight="700" font-size="17" letter-spacing="-0.9" fill="url(#gtx)" stroke="#f2c4c4" stroke-width="0.35">AV</text></svg>
<div class="nm" style="top:813.88px">[IPZ-935] 激ピストン×園コス コスプレかました上園ちゃんにぱちゅんぱちゅんと激ピストン 上園まみ</div>
<svg class="ic" style="left:989px;top:815.23px" width="14" height="12" viewBox="0 0 14 12"><rect x="5.0" y="0" width="2.9" height="4.6" fill="#337ab7"/><path d="M2.9 4.4H10.4L6.45 8.1Z" fill="#337ab7"/><path d="M0.6 7.9H4.6L6.45 9.5L8.3 7.9H12.7Q13.3 7.9 13.3 8.5V11.3Q13.3 11.9 12.7 11.9H0.6Q0 11.9 0 11.3V8.5Q0 7.9 0.6 7.9Z" fill="#337ab7"/></svg>
<svg class="ic" style="left:1011.3px;top:816.03px" width="13" height="13" viewBox="0 0 13 13"><rect x="0" y="0" width="4.2" height="3.9" fill="#337ab7"/><rect x="8.1" y="0" width="4.2" height="3.9" fill="#337ab7"/><rect x="0" y="3.9" width="4.2" height="1.1" fill="#337ab7" opacity="0.35"/><rect x="8.1" y="3.9" width="4.2" height="1.1" fill="#337ab7" opacity="0.35"/><path d="M0 5.0H4.2V5.9A1.95 1.95 0 0 0 8.1 5.9V5.0H12.3V5.85A6.15 6.15 0 0 1 0 5.85Z" fill="#337ab7"/></svg>
<div class="c" style="left:1035.50px;width:98.50px;top:813.93px;color:#333">1.4 GiB</div>
<div class="c" style="left:1134.00px;width:139.00px;top:813.93px;color:#333">2017-05-15 13:13</div>
<div class="c" style="left:1273.00px;width:49.00px;top:813.93px;color:#008000">17</div>
<div class="c" style="left:1322.00px;width:50.00px;top:813.93px;color:#ff0000">48</div>
<div class="c" style="left:1372.00px;width:49.50px;top:813.93px;color:#333">52</div>
<svg class="ic" style="left:298.2px;top:842.73px" width="78.7" height="27.3" viewBox="0 0 79 27"><use href="#b-AV"/><rect x="0.5" y="0.5" width="78" height="26" rx="2.8" fill="none" stroke="#2a0c0c" stroke-width="1" opacity="0.85"/><text x="74.5" y="19.6" text-anchor="end" font-family="Liberation Sans" font-weight="700" font-size="17" letter-spacing="-0.9" fill="#3a0505" stroke="#3a0505" stroke-width="2.6" stroke-linejoin="round">AV</text><text x="74.5" y="19.6" text-anchor="end" font-family="Liberation Sans" font-weight="700" font-size="17" letter-spacing="-0.9" fill="url(#gtx)" stroke="#f2c4c4" stroke-width="0.35">AV</text></svg>
<div class="nm" style="top:848.08px">[MIMK-048] 時×停止club～生オナホにされる少女達～ 緒奈もえ</div>
<svg class="ic" style="left:989px;top:849.43px" width="14" height="12" viewBox="0 0 14 12"><rect x="5.0" y="0" width="2.9" height="4.6" fill="#337ab7"/><path d="M2.9 4.4H10.4L6.45 8.1Z" fill="#337ab7"/><path d="M0.6 7.9H4.6L6.45 9.5L8.3 7.9H12.7Q13.3 7.9 13.3 8.5V11.3Q13.3 11.9 12.7 11.9H0.6Q0 11.9 0 11.3V8.5Q0 7.9 0.6 7.9Z" fill="#337ab7"/></svg>
<svg class="ic" style="left:1011.3px;top:850.23px" width="13" height="13" viewBox="0 0 13 13"><rect x="0" y="0" width="4.2" height="3.9" fill="#337ab7"/><rect x="8.1" y="0" width="4.2" height="3.9" fill="#337ab7"/><rect x="0" y="3.9" width="4.2" height="1.1" fill="#337ab7" opacity="0.35"/><rect x="8.1" y="3.9" width="4.2" height="1.1" fill="#337ab7" opacity="0.35"/><path d="M0 5.0H4.2V5.9A1.95 1.95 0 0 0 8.1 5.9V5.0H12.3V5.85A6.15 6.15 0 0 1 0 5.85Z" fill="#337ab7"/></svg>
<div class="c" style="left:1035.50px;width:98.50px;top:848.13px;color:#333">1.5 GiB</div>
<div class="c" style="left:1134.00px;width:139.00px;top:848.13px;color:#333">2017-05-15 13:13</div>
<div class="c" style="left:1273.00px;width:49.00px;top:848.13px;color:#008000">10</div>
<div class="c" style="left:1322.00px;width:50.00px;top:848.13px;color:#ff0000">40</div>
<div class="c" style="left:1372.00px;width:49.50px;top:848.13px;color:#333">43</div>
<svg class="ic" style="left:298.2px;top:876.92px" width="78.7" height="27.3" viewBox="0 0 79 27"><use href="#b-AV"/><rect x="0.5" y="0.5" width="78" height="26" rx="2.8" fill="none" stroke="#2a0c0c" stroke-width="1" opacity="0.85"/><text x="74.5" y="19.6" text-anchor="end" font-family="Liberation Sans" font-weight="700" font-size="17" letter-spacing="-0.9" fill="#3a0505" stroke="#3a0505" stroke-width="2.6" stroke-linejoin="round">AV</text><text x="74.5" y="19.6" text-anchor="end" font-family="Liberation Sans" font-weight="700" font-size="17" letter-spacing="-0.9" fill="url(#gtx)" stroke="#f2c4c4" stroke-width="0.35">AV</text></svg>
<div class="nm" style="top:882.27px">[SHIC-071] うちの娘、家ではブラジャーを着けないので、父としてはちょっと困ってます……</div>
<svg class="ic" style="left:989px;top:883.62px" width="14" height="12" viewBox="0 0 14 12"><rect x="5.0" y="0" width="2.9" height="4.6" fill="#337ab7"/><path d="M2.9 4.4H10.4L6.45 8.1Z" fill="#337ab7"/><path d="M0.6 7.9H4.6L6.45 9.5L8.3 7.9H12.7Q13.3 7.9 13.3 8.5V11.3Q13.3 11.9 12.7 11.9H0.6Q0 11.9 0 11.3V8.5Q0 7.9 0.6 7.9Z" fill="#337ab7"/></svg>
<svg class="ic" style="left:1011.3px;top:884.42px" width="13" height="13" viewBox="0 0 13 13"><rect x="0" y="0" width="4.2" height="3.9" fill="#337ab7"/><rect x="8.1" y="0" width="4.2" height="3.9" fill="#337ab7"/><rect x="0" y="3.9" width="4.2" height="1.1" fill="#337ab7" opacity="0.35"/><rect x="8.1" y="3.9" width="4.2" height="1.1" fill="#337ab7" opacity="0.35"/><path d="M0 5.0H4.2V5.9A1.95 1.95 0 0 0 8.1 5.9V5.0H12.3V5.85A6.15 6.15 0 0 1 0 5.85Z" fill="#337ab7"/></svg>
<div class="c" style="left:1035.50px;width:98.50px;top:882.32px;color:#333">2.5 GiB</div>
<div class="c" style="left:1134.00px;width:139.00px;top:882.32px;color:#333">2017-05-15 13:12</div>
<div class="c" style="left:1273.00px;width:49.00px;top:882.32px;color:#008000">10</div>
<div class="c" style="left:1322.00px;width:50.00px;top:882.32px;color:#ff0000">47</div>
<div class="c" style="left:1372.00px;width:49.50px;top:882.32px;color:#333">23</div>
<svg class="ic" style="left:298.2px;top:911.12px" width="78.7" height="27.3" viewBox="0 0 79 27"><use href="#b-AV"/><rect x="0.5" y="0.5" width="78" height="26" rx="2.8" fill="none" stroke="#2a0c0c" stroke-width="1" opacity="0.85"/><text x="74.5" y="19.6" text-anchor="end" font-family="Liberation Sans" font-weight="700" font-size="17" letter-spacing="-0.9" fill="#3a0505" stroke="#3a0505" stroke-width="2.6" stroke-linejoin="round">AV</text><text x="74.5" y="19.6" text-anchor="end" font-family="Liberation Sans" font-weight="700" font-size="17" letter-spacing="-0.9" fill="url(#gtx)" stroke="#f2c4c4" stroke-width="0.35">AV</text></svg>
<div class="nm" style="top:916.47px">[SOAV-028] 人妻の浮気心 再会 佐々木あき</div>
<svg class="ic" style="left:989px;top:917.82px" width="14" height="12" viewBox="0 0 14 12"><rect x="5.0" y="0" width="2.9" height="4.6" fill="#337ab7"/><path d="M2.9 4.4H10.4L6.45 8.1Z" fill="#337ab7"/><path d="M0.6 7.9H4.6L6.45 9.5L8.3 7.9H12.7Q13.3 7.9 13.3 8.5V11.3Q13.3 11.9 12.7 11.9H0.6Q0 11.9 0 11.3V8.5Q0 7.9 0.6 7.9Z" fill="#337ab7"/></svg>
<svg class="ic" style="left:1011.3px;top:918.62px" width="13" height="13" viewBox="0 0 13 13"><rect x="0" y="0" width="4.2" height="3.9" fill="#337ab7"/><rect x="8.1" y="0" width="4.2" height="3.9" fill="#337ab7"/><rect x="0" y="3.9" width="4.2" height="1.1" fill="#337ab7" opacity="0.35"/><rect x="8.1" y="3.9" width="4.2" height="1.1" fill="#337ab7" opacity="0.35"/><path d="M0 5.0H4.2V5.9A1.95 1.95 0 0 0 8.1 5.9V5.0H12.3V5.85A6.15 6.15 0 0 1 0 5.85Z" fill="#337ab7"/></svg>
<div class="c" style="left:1035.50px;width:98.50px;top:916.52px;color:#333">1.0 GiB</div>
<div class="c" style="left:1134.00px;width:139.00px;top:916.52px;color:#333">2017-05-15 13:12</div>
<div class="c" style="left:1273.00px;width:49.00px;top:916.52px;color:#008000">6</div>
<div class="c" style="left:1322.00px;width:50.00px;top:916.52px;color:#ff0000">29</div>
<div class="c" style="left:1372.00px;width:49.50px;top:916.52px;color:#333">10</div>
<svg class="ic" style="left:298.2px;top:945.32px" width="78.7" height="27.3" viewBox="0 0 79 27"><use href="#b-AV"/><rect x="0.5" y="0.5" width="78" height="26" rx="2.8" fill="none" stroke="#2a0c0c" stroke-width="1" opacity="0.85"/><text x="74.5" y="19.6" text-anchor="end" font-family="Liberation Sans" font-weight="700" font-size="17" letter-spacing="-0.9" fill="#3a0505" stroke="#3a0505" stroke-width="2.6" stroke-linejoin="round">AV</text><text x="74.5" y="19.6" text-anchor="end" font-family="Liberation Sans" font-weight="700" font-size="17" letter-spacing="-0.9" fill="url(#gtx)" stroke="#f2c4c4" stroke-width="0.35">AV</text></svg>
<div class="nm" style="top:950.67px">[MEYD-252] 私、実は夫の上司に犯され続けてます… 松浦理央</div>
<svg class="ic" style="left:989px;top:952.02px" width="14" height="12" viewBox="0 0 14 12"><rect x="5.0" y="0" width="2.9" height="4.6" fill="#337ab7"/><path d="M2.9 4.4H10.4L6.45 8.1Z" fill="#337ab7"/><path d="M0.6 7.9H4.6L6.45 9.5L8.3 7.9H12.7Q13.3 7.9 13.3 8.5V11.3Q13.3 11.9 12.7 11.9H0.6Q0 11.9 0 11.3V8.5Q0 7.9 0.6 7.9Z" fill="#337ab7"/></svg>
<svg class="ic" style="left:1011.3px;top:952.82px" width="13" height="13" viewBox="0 0 13 13"><rect x="0" y="0" width="4.2" height="3.9" fill="#337ab7"/><rect x="8.1" y="0" width="4.2" height="3.9" fill="#337ab7"/><rect x="0" y="3.9" width="4.2" height="1.1" fill="#337ab7" opacity="0.35"/><rect x="8.1" y="3.9" width="4.2" height="1.1" fill="#337ab7" opacity="0.35"/><path d="M0 5.0H4.2V5.9A1.95 1.95 0 0 0 8.1 5.9V5.0H12.3V5.85A6.15 6.15 0 0 1 0 5.85Z" fill="#337ab7"/></svg>
<div class="c" style="left:1035.50px;width:98.50px;top:950.72px;color:#333">1.1 GiB</div>
<div class="c" style="left:1134.00px;width:139.00px;top:950.72px;color:#333">2017-05-15 13:12</div>
<div class="c" style="left:1273.00px;width:49.00px;top:950.72px;color:#008000">7</div>
<div class="c" style="left:1322.00px;width:50.00px;top:950.72px;color:#ff0000">26</div>
<div class="c" style="left:1372.00px;width:49.50px;top:950.72px;color:#333">16</div>
<svg class="ic" style="left:298.2px;top:979.51px" width="78.7" height="27.3" viewBox="0 0 79 27"><use href="#b-Doujinshi"/><rect x="0.5" y="0.5" width="78" height="26" rx="2.8" fill="none" stroke="#2a0c0c" stroke-width="1" opacity="0.85"/><text x="74.5" y="17.6" text-anchor="end" font-family="Liberation Sans" font-weight="700" font-size="11" fill="#3a0505" stroke="#3a0505" stroke-width="2.6" stroke-linejoin="round">Doujinshi</text><text x="74.5" y="17.6" text-anchor="end" font-family="Liberation Sans" font-weight="700" font-size="11" fill="url(#gtx)" stroke="#f2c4c4" stroke-width="0.35">Doujinshi</text></svg>
<div class="nm" style="top:984.86px">(海ゆかば6) [きつねとぶどう (くろな)] なかよし♪ (艦隊これくしょん -艦これ-)</div>
<svg class="ic" style="left:989px;top:986.21px" width="14" height="12" viewBox="0 0 14 12"><rect x="5.0" y="0" width="2.9" height="4.6" fill="#337ab7"/><path d="M2.9 4.4H10.4L6.45 8.1Z" fill="#337ab7"/><path d="M0.6 7.9H4.6L6.45 9.5L8.3 7.9H12.7Q13.3 7.9 13.3 8.5V11.3Q13.3 11.9 12.7 11.9H0.6Q0 11.9 0 11.3V8.5Q0 7.9 0.6 7.9Z" fill="#337ab7"/></svg>
<svg class="ic" style="left:1011.3px;top:987.01px" width="13" height="13" viewBox="0 0 13 13"><rect x="0" y="0" width="4.2" height="3.9" fill="#337ab7"/><rect x="8.1" y="0" width="4.2" height="3.9" fill="#337ab7"/><rect x="0" y="3.9" width="4.2" height="1.1" fill="#337ab7" opacity="0.35"/><rect x="8.1" y="3.9" width="4.2" height="1.1" fill="#337ab7" opacity="0.35"/><path d="M0 5.0H4.2V5.9A1.95 1.95 0 0 0 8.1 5.9V5.0H12.3V5.85A6.15 6.15 0 0 1 0 5.85Z" fill="#337ab7"/></svg>
<div class="c" style="left:1035.50px;width:98.50px;top:984.91px;color:#333">51.2 MiB</div>
<div class="c" style="left:1134.00px;width:139.00px;top:984.91px;color:#333">2017-05-15 13:11</div>
<div class="c" style="left:1273.00px;width:49.00px;top:984.91px;color:#008000">8</div>
<div class="c" style="left:1322.00px;width:50.00px;top:984.91px;color:#ff0000">3</div>
<div class="c" style="left:1372.00px;width:49.50px;top:984.91px;color:#333">25</div>
<svg class="ic" style="left:298.2px;top:1013.71px" width="78.7" height="27.3" viewBox="0 0 79 27"><use href="#b-Doujinshi"/><rect x="0.5" y="0.5" width="78" height="26" rx="2.8" fill="none" stroke="#2a0c0c" stroke-width="1" opacity="0.85"/><text x="74.5" y="17.6" text-anchor="end" font-family="Liberation Sans" font-weight="700" font-size="11" fill="#3a0505" stroke="#3a0505" stroke-width="2.6" stroke-linejoin="round">Doujinshi</text><text x="74.5" y="17.6" text-anchor="end" font-family="Liberation Sans" font-weight="700" font-size="11" fill="url(#gtx)" stroke="#f2c4c4" stroke-width="0.35">Doujinshi</text></svg>
<div class="nm" style="top:1019.06px">(COMIC1☆11) [ハイブリッド事務室 (室永叉焼)] ハイブリッド通信 vol.26 (猫のお寺の知恩さん)</div>
<svg class="ic" style="left:989px;top:1020.41px" width="14" height="12" viewBox="0 0 14 12"><rect x="5.0" y="0" width="2.9" height="4.6" fill="#337ab7"/><path d="M2.9 4.4H10.4L6.45 8.1Z" fill="#337ab7"/><path d="M0.6 7.9H4.6L6.45 9.5L8.3 7.9H12.7Q13.3 7.9 13.3 8.5V11.3Q13.3 11.9 12.7 11.9H0.6Q0 11.9 0 11.3V8.5Q0 7.9 0.6 7.9Z" fill="#337ab7"/></svg>
<svg class="ic" style="left:1011.3px;top:1021.21px" width="13" height="13" viewBox="0 0 13 13"><rect x="0" y="0" width="4.2" height="3.9" fill="#337ab7"/><rect x="8.1" y="0" width="4.2" height="3.9" fill="#337ab7"/><rect x="0" y="3.9" width="4.2" height="1.1" fill="#337ab7" opacity="0.35"/><rect x="8.1" y="3.9" width="4.2" height="1.1" fill="#337ab7" opacity="0.35"/><path d="M0 5.0H4.2V5.9A1.95 1.95 0 0 0 8.1 5.9V5.0H12.3V5.85A6.15 6.15 0 0 1 0 5.85Z" fill="#337ab7"/></svg>
<div class="c" style="left:1035.50px;width:98.50px;top:1019.11px;color:#333">30.9 MiB</div>
<div class="c" style="left:1134.00px;width:139.00px;top:1019.11px;color:#333">2017-05-15 13:07</div>
<div class="c" style="left:1273.00px;width:49.00px;top:1019.11px;color:#008000">7</div>
<div class="c" style="left:1322.00px;width:50.00px;top:1019.11px;color:#ff0000">2</div>
<div class="c" style="left:1372.00px;width:49.50px;top:1019.11px;color:#333">22</div>
<svg class="ic" style="left:298.2px;top:1047.90px" width="78.7" height="27.3" viewBox="0 0 79 27"><use href="#b-Doujinshi"/><rect x="0.5" y="0.5" width="78" height="26" rx="2.8" fill="none" stroke="#2a0c0c" stroke-width="1" opacity="0.85"/><text x="74.5" y="17.6" text-anchor="end" font-family="Liberation Sans" font-weight="700" font-size="11" fill="#3a0505" stroke="#3a0505" stroke-width="2.6" stroke-linejoin="round">Doujinshi</text><text x="74.5" y="17.6" text-anchor="end" font-family="Liberation Sans" font-weight="700" font-size="11" fill="url(#gtx)" stroke="#f2c4c4" stroke-width="0.35">Doujinshi</text></svg>
<div class="nm" style="top:1053.25px">(例大祭14) [やし屋 (YASSY)] Dreams dreams (東方Project)</div>
<svg class="ic" style="left:989px;top:1054.60px" width="14" height="12" viewBox="0 0 14 12"><rect x="5.0" y="0" width="2.9" height="4.6" fill="#337ab7"/><path d="M2.9 4.4H10.4L6.45 8.1Z" fill="#337ab7"/><path d="M0.6 7.9H4.6L6.45 9.5L8.3 7.9H12.7Q13.3 7.9 13.3 8.5V11.3Q13.3 11.9 12.7 11.9H0.6Q0 11.9 0 11.3V8.5Q0 7.9 0.6 7.9Z" fill="#337ab7"/></svg>
<svg class="ic" style="left:1011.3px;top:1055.40px" width="13" height="13" viewBox="0 0 13 13"><rect x="0" y="0" width="4.2" height="3.9" fill="#337ab7"/><rect x="8.1" y="0" width="4.2" height="3.9" fill="#337ab7"/><rect x="0" y="3.9" width="4.2" height="1.1" fill="#337ab7" opacity="0.35"/><rect x="8.1" y="3.9" width="4.2" height="1.1" fill="#337ab7" opacity="0.35"/><path d="M0 5.0H4.2V5.9A1.95 1.95 0 0 0 8.1 5.9V5.0H12.3V5.85A6.15 6.15 0 0 1 0 5.85Z" fill="#337ab7"/></svg>
<div class="c" style="left:1035.50px;width:98.50px;top:1053.30px;color:#333">38.1 MiB</div>
<div class="c" style="left:1134.00px;width:139.00px;top:1053.30px;color:#333">2017-05-15 13:04</div>
<div class="c" style="left:1273.00px;width:49.00px;top:1053.30px;color:#008000">9</div>
<div class="c" style="left:1322.00px;width:50.00px;top:1053.30px;color:#ff0000">2</div>
<div class="c" style="left:1372.00px;width:49.50px;top:1053.30px;color:#333">22</div>
<div class="abs" style="left:1714px;top:0;width:14px;height:1080px;background:#fafafa;border-left:1.5px solid #ebebeb"></div>
<div class="abs" style="left:1718px;top:2px;width:7px;height:391px;background:#c0c0c0;border-radius:4px"></div>
<div class="t" style="left:1630px;top:1013px;font-size:28px;line-height:30px;color:#fff;text-shadow:0 0 1px #bbb,0 0 1px #bbb">钛媒体</div>
<div class="t" style="left:1631px;top:1045.5px;font-size:15px;line-height:15px;letter-spacing:1.6px;color:#fff;text-shadow:0 0 1px #bbb,0 0 1px #bbb">TMTP<span style="color:#6cc">O</span>ST</div></body></html>
